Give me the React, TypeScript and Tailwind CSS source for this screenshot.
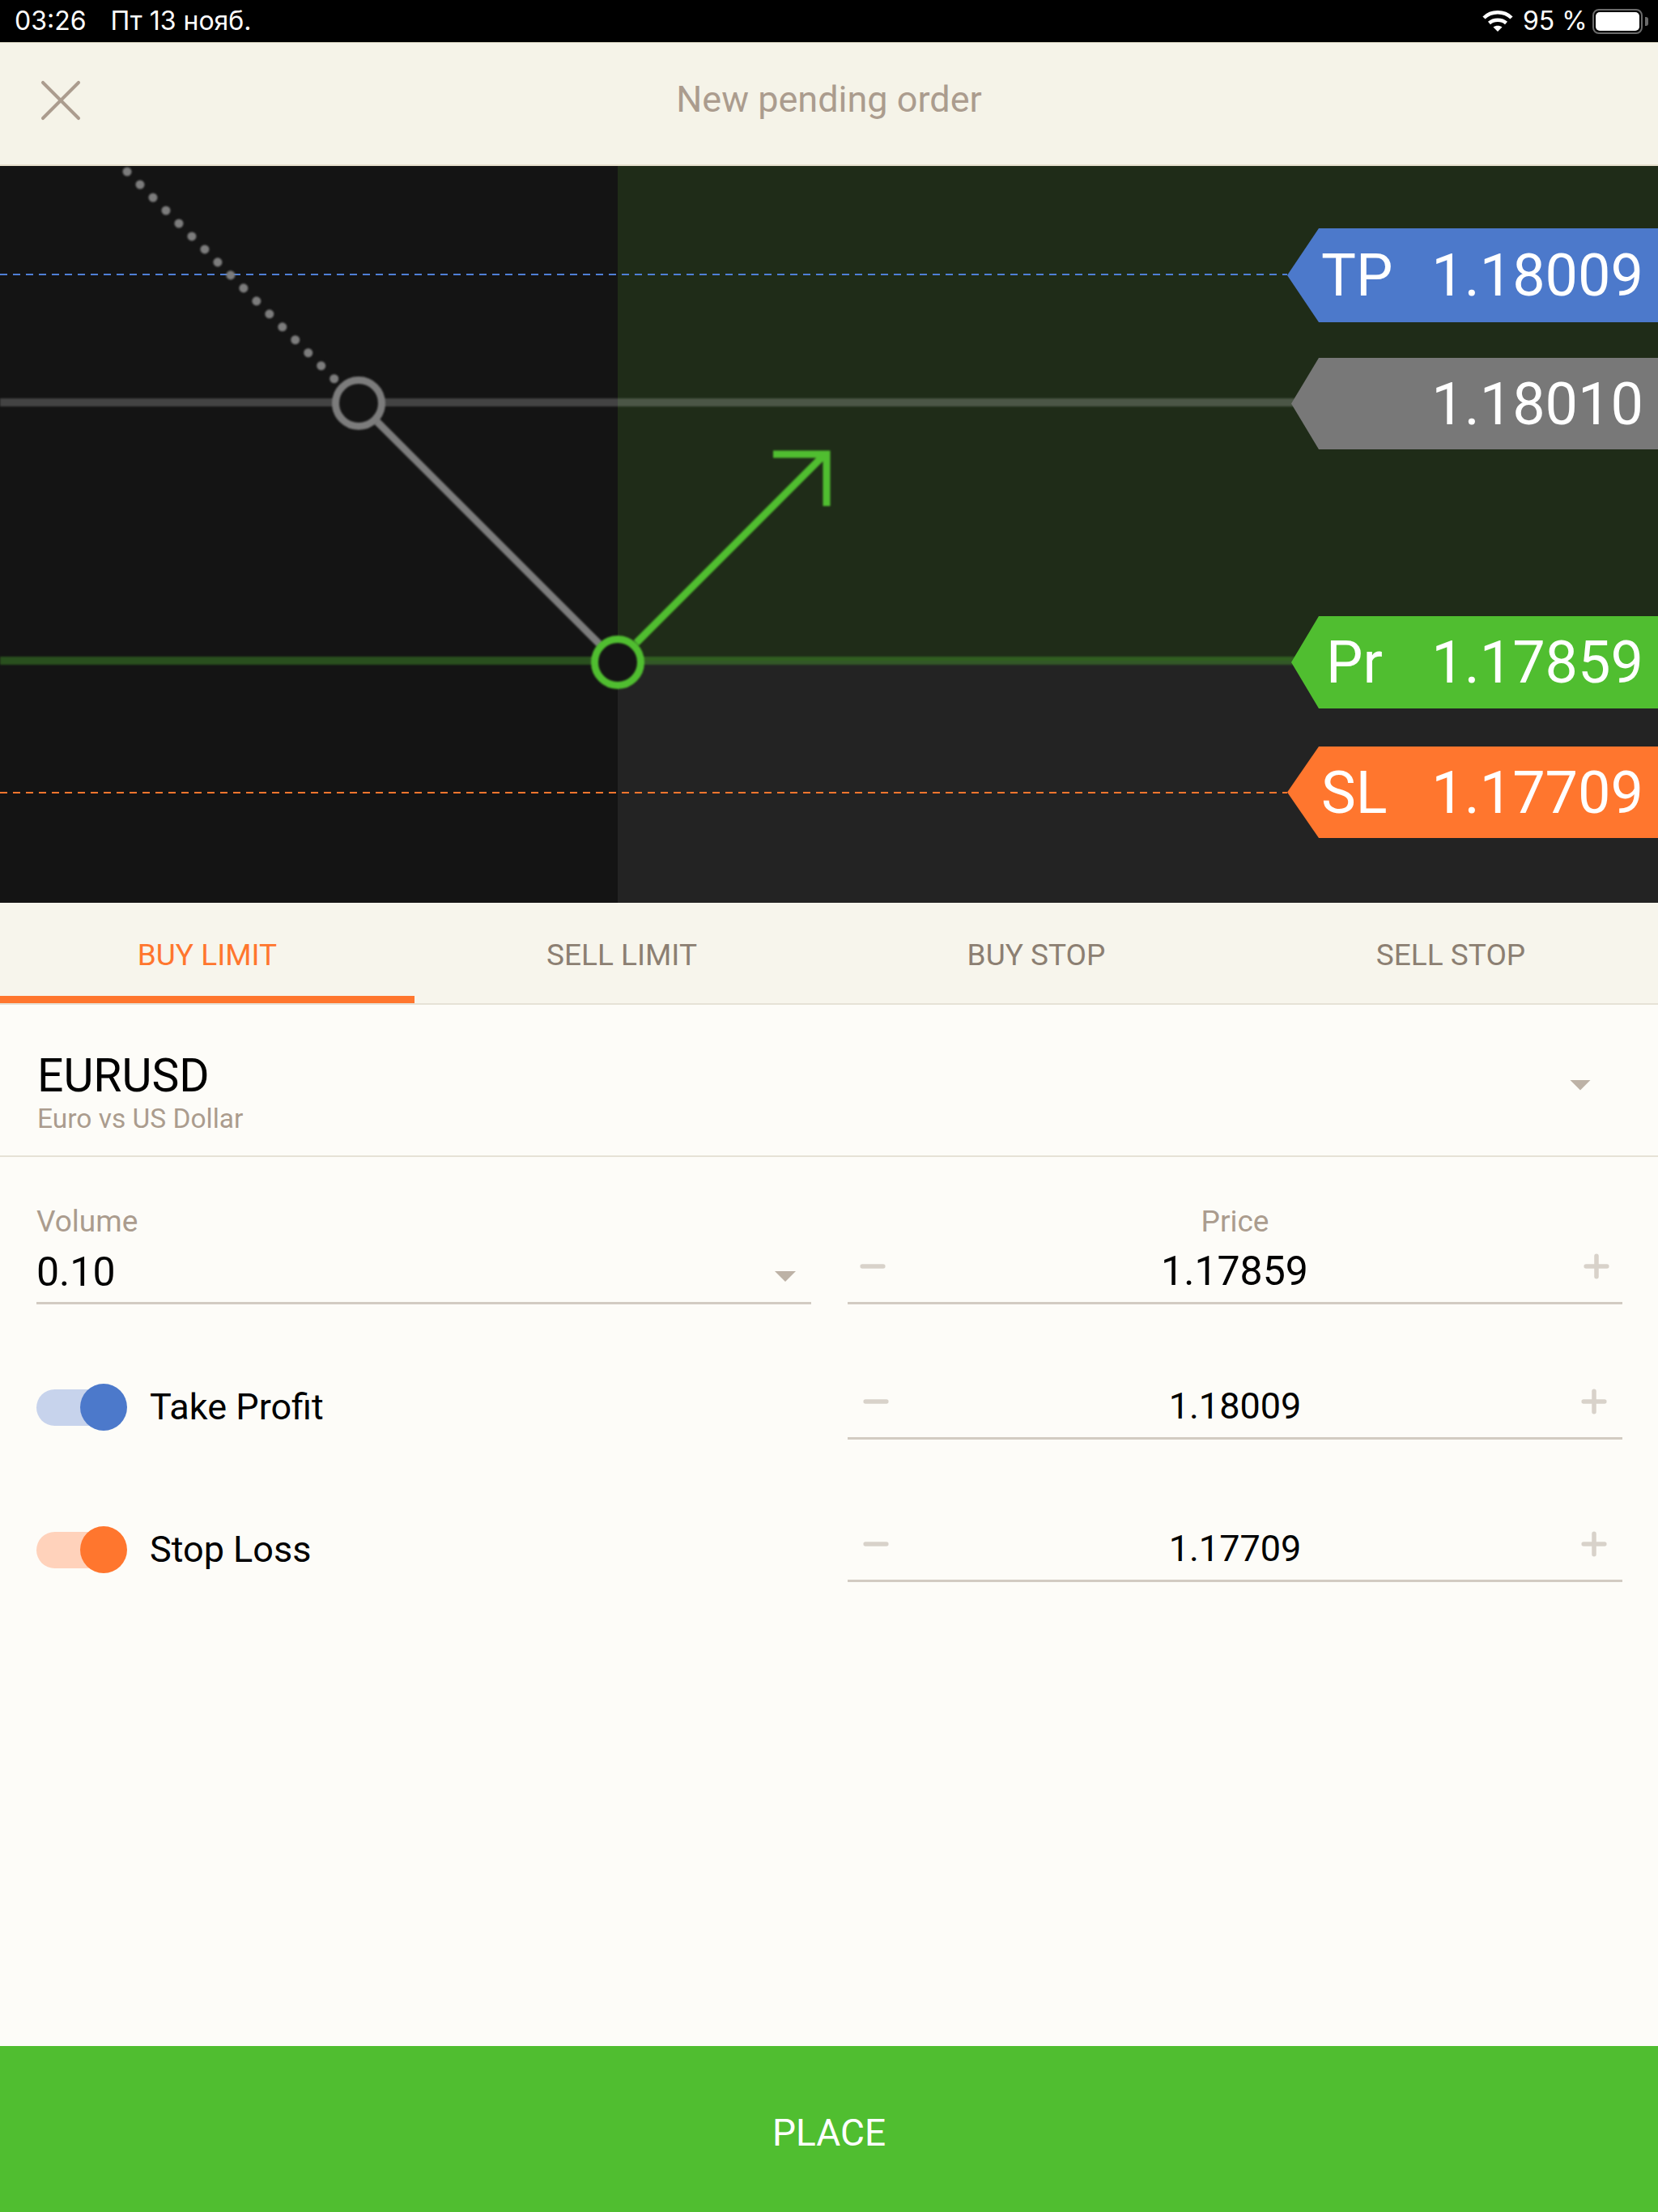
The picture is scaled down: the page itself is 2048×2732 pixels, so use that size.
import { Minus, Plus, X } from "lucide-react";

const roboto = "font-['Roboto',sans-serif]";

const tags = [
  {
    label: "TP",
    value: "1.18009",
    box: "top-[77px] left-[1590px] h-[116px] bg-[#4c79cb] [clip-path:polygon(39px_0,100%_0,100%_100%,39px_100%,0_50%)]",
    labelBox: "pl-[42px]",
  },
  {
    label: "",
    value: "1.18010",
    box: "top-[237px] left-[1595px] h-[113px] bg-[#787878] blur-[0.6px] [clip-path:polygon(34px_0,100%_0,100%_100%,34px_100%,0_50%)]",
    labelBox: "pl-[40px]",
  },
  {
    label: "Pr",
    value: "1.17859",
    box: "top-[556px] left-[1595px] h-[114px] bg-[#50be30] blur-[0.4px] [clip-path:polygon(34px_0,100%_0,100%_100%,34px_100%,0_50%)]",
    labelBox: "pl-[43px]",
  },
  {
    label: "SL",
    value: "1.17709",
    box: "top-[717px] left-[1590px] h-[113px] bg-[#ff762e] [clip-path:polygon(39px_0,100%_0,100%_100%,39px_100%,0_50%)]",
    labelBox: "pl-[42px]",
  },
];

function StatusBar() {
  return (
    <div className="flex h-[53px] items-center justify-between border-b border-[#d8d4c0] bg-black pl-[18px] pr-[12px] font-['Inter',sans-serif] text-[32px] text-white">
      <div className="flex gap-[30px]">
        <span>03:26</span>
        <span>Пт 13 нояб.</span>
      </div>
      <div className="flex items-center">
        <svg width="38" height="28" viewBox="0 0 38 28" fill="none" stroke="white" strokeWidth="4.5">
          <path d="M2 10 C11 1 27 1 36 10" />
          <path d="M8.5 16.5 C14 11.5 24 11.5 29.5 16.5" />
          <path d="M19 27 L13.5 21.5 C16.5 19 21.5 19 24.5 21.5 Z" fill="white" stroke="none" />
        </svg>
        <span className="ml-[12px] w-[77px] whitespace-nowrap">95 %</span>
        <div className="ml-[9px] h-[31px] w-[62px] rounded-[8px] border-2 border-[#6b6b6b] p-[2px]">
          <div className="h-full w-[54px] rounded-[5px] bg-white" />
        </div>
        <div className="ml-[3px] h-[11px] w-[4px] rounded-r-[3px] bg-[#6b6b6b]" />
      </div>
    </div>
  );
}

function Chart() {
  return (
    <div className={`relative h-[910px] overflow-hidden ${roboto}`}>
      <div className="flex h-full">
        <div className="w-[763px] bg-[#141414]" />
        <div className="flex flex-1 flex-col">
          <div className="h-[611px] bg-[#1f2c18]" />
          <div className="flex-1 bg-[#232323]" />
        </div>
      </div>

      {/* drawing coordinates are page y minus 205 */}
      <svg className="absolute inset-0" width="2048" height="910" viewBox="0 0 2048 910" fill="none">
        <line x1="0" y1="134" x2="1590" y2="134" stroke="#4f7fd6" strokeWidth="2" strokeDasharray="9 7" />
        <line x1="0" y1="774" x2="1590" y2="774" stroke="#ff762e" strokeWidth="2" strokeDasharray="9 7" />
        <g className="blur-[0.8px]">
          <line x1="0" y1="292" x2="1600" y2="292" stroke="#ffffff" strokeOpacity="0.2" strokeWidth="10" />
          <line x1="0" y1="611" x2="1600" y2="611" stroke="#50be30" strokeOpacity="0.35" strokeWidth="10" />
          <line x1="157" y1="7" x2="415" y2="265" stroke="#7c7c7c" strokeWidth="11" strokeLinecap="round" strokeDasharray="0.1 22.5" />
          <line x1="466" y1="316" x2="740" y2="590" stroke="#7c7c7c" strokeWidth="9" />
          <circle cx="443" cy="293" r="28.5" fill="#141414" stroke="#7c7c7c" strokeWidth="9" />
          <path d="M786 589 L1020 355" stroke="#50be30" strokeWidth="9" />
          <path d="M955 356 H1021 V420" stroke="#50be30" strokeWidth="9" />
          <circle cx="763" cy="613" r="28.5" fill="#141414" stroke="#50be30" strokeWidth="9" />
        </g>
      </svg>

      {tags.map((t) => (
        <div key={t.value} className={`absolute right-0 flex items-center justify-between pr-[18px] pt-[2px] text-[72px] leading-none text-white ${t.box}`}>
          <span className={t.labelBox}>{t.label}</span>
          <span>{t.value}</span>
        </div>
      ))}
    </div>
  );
}

function Stepper({ value, large }: { value: string; large?: boolean }) {
  return (
    <div className={`flex h-[82px] items-center justify-between border-b-[3px] border-[#d2cbc2] ${large ? "pl-[9px] pr-[10px]" : "pl-[13px] pr-[13px]"}`}>
      <Minus size={44} strokeWidth={3} className="mb-[10px] text-[#d8d2ca]" />
      <span className={`pt-[2px] text-black ${large ? "text-[50px]" : "text-[45px]"} leading-none`}>{value}</span>
      <Plus size={44} strokeWidth={3} className="mb-[10px] text-[#d8d2ca]" />
    </div>
  );
}

function Toggle({ track, knob }: { track: string; knob: string }) {
  return (
    <div className="relative mt-[2px] h-[58px] w-[112px]">
      <div className={`absolute left-0 top-[7px] h-[45px] w-[90px] rounded-full ${track}`} />
      <div className={`absolute left-[54px] top-0 h-[58px] w-[58px] rounded-full ${knob}`} />
    </div>
  );
}

export default function App() {
  return (
    <div className={`flex h-[2732px] w-[2048px] flex-col bg-[#fdfcf8] ${roboto}`}>
      <StatusBar />

      <div className="relative flex h-[152px] items-center justify-center border-b-2 border-[#e6dfcc] bg-[#f5f3e8] pb-[10px] text-[45px] text-[#ab9c8e]">
        <X size={88} strokeWidth={1.1} className="absolute left-[31px] top-[27px] text-[#ab9c8e]" />
        <span>New pending order</span>
      </div>

      <Chart />

      <div className="grid h-[126px] grid-cols-4 border-b-2 border-[#e6e2d6] bg-[#f7f5ec] text-[37px] text-[#8c7f72]">
        <div className="flex items-center justify-center border-b-[9px] border-[#ff762e] pt-[15px] text-[#ff762e]">BUY LIMIT</div>
        <div className="flex items-center justify-center pt-[6px]">SELL LIMIT</div>
        <div className="flex items-center justify-center pt-[6px]">BUY STOP</div>
        <div className="flex items-center justify-center pt-[6px]">SELL STOP</div>
      </div>

      <div className="flex h-[188px] items-center justify-between border-b-2 border-[#e6e2d6] pl-[46px] pr-[83px]">
        <div className="mt-[32px]">
          <div className="mb-[4px] text-[57px] leading-[60px] text-black">EURUSD</div>
          <div className="text-[33.5px] leading-[38px] text-[#ab9c8e]">Euro vs US Dollar</div>
        </div>
        <div className="mt-[12px] h-[13px] w-[26px] bg-[#bdb2a6] [clip-path:polygon(0_0,100%_0,50%_100%)]" />
      </div>

      <div className="grid grid-cols-2 gap-x-[45px] pl-[45px] pr-[44px] pt-[60px]">
        <div>
          <div className="text-[37px] leading-[40px] text-[#ab9c8e]">Volume</div>
          <div className="flex h-[82px] items-center justify-between border-b-[3px] border-[#d2cbc2] pr-[19px]">
            <span className="pt-[4px] text-[50px] leading-none text-black">0.10</span>
            <div className="mt-[16px] h-[13px] w-[26px] bg-[#bdb2a6] [clip-path:polygon(0_0,100%_0,50%_100%)]" />
          </div>
        </div>
        <div>
          <div className="text-center text-[37px] leading-[40px] text-[#ab9c8e]">Price</div>
          <Stepper value="1.17859" large />
        </div>

        <div className="mt-[85px] flex h-[82px] items-center gap-[28px] text-[45px] leading-none text-black">
          <Toggle track="bg-[#c7d3ec]" knob="bg-[#4c79cb]" />
          <span>Take Profit</span>
        </div>
        <div className="mt-[85px]">
          <Stepper value="1.18009" />
        </div>

        <div className="mt-[94px] flex h-[82px] items-center gap-[28px] text-[45px] leading-none text-black">
          <Toggle track="bg-[#ffd2bb]" knob="bg-[#ff762e]" />
          <span>Stop Loss</span>
        </div>
        <div className="mt-[94px]">
          <Stepper value="1.17709" />
        </div>
      </div>

      <div className="flex-1" />

      <div className="flex h-[205px] items-center justify-center bg-[#50be30] pt-[10px] text-[46px] text-white">PLACE</div>
    </div>
  );
}
